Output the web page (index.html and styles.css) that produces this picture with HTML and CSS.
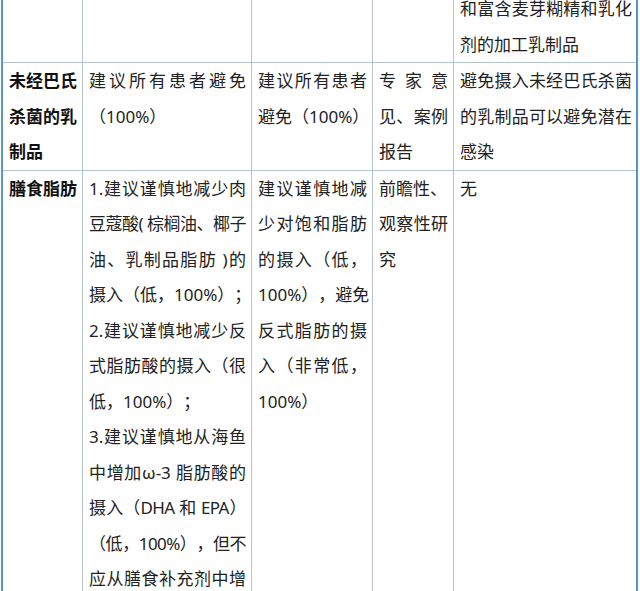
FILE: index.html
```html
<!DOCTYPE html>
<html lang="zh-CN">
<head>
<meta charset="utf-8">
<title>表格</title>
<link rel="stylesheet" href="styles.css">
</head>
<body>
<div class="sheet">
  <div class="c head"></div>
  <div class="c"></div>
  <div class="c"></div>
  <div class="c"></div>
  <div class="c end">
    <span class="ln j">和富含麦芽糊精和乳化</span>
    <span class="ln">剂的加工乳制品</span>
  </div>

  <div class="c head">
    <span class="ln">未经巴氏</span>
    <span class="ln">杀菌的乳</span>
    <span class="ln">制品</span>
  </div>
  <div class="c">
    <span class="ln j">建议所有患者避免</span>
    <span class="ln">（100%）</span>
  </div>
  <div class="c">
    <span class="ln j">建议所有患者</span>
    <span class="ln">避免（100%）</span>
  </div>
  <div class="c">
    <span class="ln j">专家意</span>
    <span class="ln j">见、案例</span>
    <span class="ln">报告</span>
  </div>
  <div class="c end">
    <span class="ln j">避免摄入未经巴氏杀菌</span>
    <span class="ln j">的乳制品可以避免潜在</span>
    <span class="ln">感染</span>
  </div>

  <div class="c head">
    <span class="ln">膳食脂肪</span>
  </div>
  <div class="c">
    <span class="ln j">1.建议谨慎地减少肉</span>
    <span class="ln j tight">豆蔻酸( 棕榈油、椰子</span>
    <span class="ln j">油、乳制品脂肪 )的</span>
    <span class="ln">摄入（低，100%）；</span>
    <span class="ln j">2.建议谨慎地减少反</span>
    <span class="ln j">式脂肪酸的摄入（很</span>
    <span class="ln">低，100%）；</span>
    <span class="ln j">3.建议谨慎地从海鱼</span>
    <span class="ln j">中增加ω-3 脂肪酸的</span>
    <span class="ln j tight">摄入（DHA 和 EPA）</span>
    <span class="ln j tight">（低，100%），但不</span>
    <span class="ln j">应从膳食补充剂中增</span>
    <span class="ln">加（低，100%）</span>
  </div>
  <div class="c">
    <span class="ln j">建议谨慎地减</span>
    <span class="ln j">少对饱和脂肪</span>
    <span class="ln j">的摄入（低，</span>
    <span class="ln j">100%），避免</span>
    <span class="ln j">反式脂肪的摄</span>
    <span class="ln j">入（非常低，</span>
    <span class="ln">100%）</span>
  </div>
  <div class="c">
    <span class="ln">前瞻性、</span>
    <span class="ln j">观察性研</span>
    <span class="ln">究</span>
  </div>
  <div class="c end">
    <span class="ln">无</span>
  </div>
</div>
</body>
</html>
```

FILE: styles.css
```css
html, body {
  margin: 0;
  padding: 0;
  background: #ffffff;
}

body {
  overflow: hidden;
  font-family: "Noto Sans", "Noto Sans CJK SC", sans-serif;
  font-size: 17px;
  line-height: 35.5px;
  color: #222222;
  text-spacing-trim: space-all;
}

.sheet {
  display: grid;
  grid-template-columns: 80px 169px 121px 81px 182px;
  width: 633px;
  margin: -9px 0 0 1px;
  border-left: 2px solid #5a98c9;
  border-right: 2px solid #4f93cf;
}

.c {
  box-sizing: border-box;
  padding: 0 5px 0 6px;
  border-right: 1px solid #b4c3cc;
  border-bottom: 1px solid #b4c3cc;
  min-width: 0;
}

.c.end {
  border-right: 0;
  padding-right: 4px;
}

.head {
  font-weight: 700;
  color: #111111;
}

.ln {
  display: block;
  white-space: nowrap;
}

.ln.j {
  text-align: justify;
  text-align-last: justify;
}

.ln.tight {
  letter-spacing: -0.6px;
}
```
